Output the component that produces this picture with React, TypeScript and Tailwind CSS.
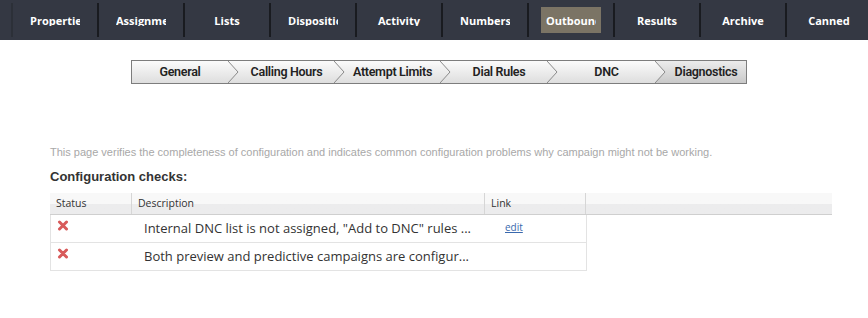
import React from "react";

const navItems = ["Properties", "Assignments", "Lists", "Dispositions", "Activity", "Numbers", "Outbound", "Results", "Archive", "Canned"];

function NavBar() {
  return (
    <div className="h-10 bg-[#343843] flex items-stretch pl-[11px] overflow-hidden" style={{ fontFamily: '"Open Sans", "Noto Sans", sans-serif' }}>
      {navItems.map((name, i) => (
        <div key={name} className="flex items-center w-[86px] shrink-0">
          <div className={"w-[2px] h-[34px] shrink-0 " + (i === 0 ? "bg-[#2c3038]" : "bg-[#191b20]")} />
          <div className="flex-1 flex justify-center">
            <div className={"w-[60px] h-[26px] px-[5px] flex items-center " + (name === "Outbound" ? "bg-[#7b7465]" : "")}>
              <div className="w-full overflow-hidden whitespace-nowrap text-center text-[11px] font-bold text-white leading-none">{name}</div>
            </div>
          </div>
        </div>
      ))}
    </div>
  );
}

function Chevron({ active }: { active?: boolean }) {
  return (
    <svg width="11" height="22" viewBox="0 0 11 22" className="shrink-0 block">
      <defs>
        <linearGradient id="ag" x1="0" y1="0" x2="0" y2="1">
          <stop offset="0" stopColor="#ececec" />
          <stop offset="1" stopColor="#c9c9c9" />
        </linearGradient>
      </defs>
      {active && <polygon points="0,0 11,0 11,22 0,22 10,11" fill="url(#ag)" />}
      <polyline points="0,0 10,11 0,22" fill="none" stroke="#8a8a8a" strokeWidth="1" />
    </svg>
  );
}

const steps: { name: string; w: number }[] = [
  { name: "General", w: 96 },
  { name: "Calling Hours", w: 95 },
  { name: "Attempt Limits", w: 95 },
  { name: "Dial Rules", w: 96 },
  { name: "DNC", w: 97 },
  { name: "Diagnostics", w: 83 },
];

function Wizard() {
  return (
    <div
      className="ml-[131px] mt-[20px] w-[616px] h-[24px] border border-[#7d7d7d] flex items-stretch bg-gradient-to-b from-[#fbfbfb] to-[#dedede] text-[12.5px] font-semibold text-[#222] tracking-[-0.3px]"
      style={{ fontFamily: '"Roboto", "Noto Sans", sans-serif' }}
    >
      {steps.map((s, i) => {
        const active = s.name === "Diagnostics";
        return (
          <React.Fragment key={s.name}>
            {i > 0 && <Chevron active={active} />}
            <div
              className={"flex items-center justify-center shrink-0 " + (active ? "bg-gradient-to-b from-[#ececec] to-[#c9c9c9] flex-1" : "")}
              style={active ? undefined : { width: s.w }}
            >
              {s.name}
            </div>
          </React.Fragment>
        );
      })}
    </div>
  );
}

function RedX() {
  return (
    <svg width="12" height="11" viewBox="0 0 12 11" className="block">
      <path d="M2.5 2 L9.5 9 M9.5 2 L2.5 9" stroke="#d85a5a" strokeWidth="3" strokeLinecap="round" />
    </svg>
  );
}

const rows = [
  { desc: 'Internal DNC list is not assigned, "Add to DNC" rules ...', link: true },
  { desc: "Both preview and predictive campaigns are configur...", link: false },
];

function Table() {
  const font = { fontFamily: '"Open Sans", "Noto Sans", sans-serif' };
  return (
    <div className="ml-[50px] mt-[8px] w-[782px]" style={font}>
      <div className="flex h-[22px] border-b border-[#cfcfcf] bg-gradient-to-b from-[#f8f8f8] from-50% to-[#ececed] to-50% text-[10.5px] text-[#333]">
        <div className="w-[82px] pl-[6px] flex items-center border-r border-[#d6d6d6]">Status</div>
        <div className="w-[353px] pl-[6px] flex items-center border-r border-[#d6d6d6]">Description</div>
        <div className="w-[101px] pl-[6px] flex items-center border-r border-[#d6d6d6]">Link</div>
        <div className="flex-1" />
      </div>
      <div className="w-[537px] border-l border-r border-[#e3e3e3]">
        {rows.map((r) => (
          <div key={r.desc} className="flex h-[28px] border-b border-[#e3e3e3]">
            <div className="w-[82px] pl-[6px] pt-[5px]">
              <RedX />
            </div>
            <div className="w-[353px] pl-[11px] flex items-center text-[13px] text-[#333] whitespace-nowrap overflow-hidden">{r.desc}</div>
            <div className="flex-1 pl-[19px] pt-[5px] text-[10px]">
              {r.link && <span className="text-[#3a69ad] underline">edit</span>}
            </div>
          </div>
        ))}
      </div>
    </div>
  );
}

export default function App() {
  return (
    <div className="w-[868px] h-[318px] bg-white overflow-hidden">
      <NavBar />
      <Wizard />
      <div className="ml-[50px] mt-[62px] text-[11px] text-[#a8a8a8] leading-[13px]" style={{ fontFamily: '"Liberation Sans", Arial, sans-serif' }}>
        This page verifies the completeness of configuration and indicates common configuration problems why campaign might not be working.
      </div>
      <div className="ml-[50px] mt-[10px] text-[13px] font-bold text-[#333] leading-[16px]" style={{ fontFamily: '"Liberation Sans", Arial, sans-serif' }}>
        Configuration checks:
      </div>
      <Table />
    </div>
  );
}
